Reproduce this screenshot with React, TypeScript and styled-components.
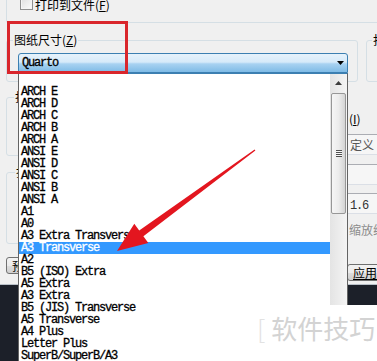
import React from "react";
import styled, { createGlobalStyle } from "styled-components";

const UI = `"Noto Sans CJK SC", "Noto Sans", sans-serif`;
const MONO = `"Liberation Mono", "DejaVu Sans Mono", monospace`;

const Global = createGlobalStyle`
  html, body { margin: 0; padding: 0; background: #f0f0f0; }
  body { font-family: ${UI}; }
`;

const Screen = styled.div`
  position: relative;
  width: 377px;
  height: 361px;
  overflow: hidden;
  background: #1c2029;
  font-family: ${UI};
  font-size: 12px;
  color: #000;
`;

const Dialog = styled.div`
  height: 284px;
  background: #f0f0f0;
  border-bottom: 1px solid #b9c0c8;
  overflow: hidden;
`;

const PrinterGroup = styled.div`
  height: 22px;
  margin-left: 6px;
  padding-left: 13px;
  border-left: 1px solid #d5dfe5;
  border-bottom: 1px solid #d5dfe5;
  border-bottom-left-radius: 3px;
  display: flex;
  align-items: flex-start;
`;

const CheckRow = styled.label`
  display: flex;
  align-items: flex-start;
  gap: 1px;
  margin-top: -3px;
`;

const CheckBox = styled.span`
  width: 11px;
  height: 11px;
  border: 1px solid #8f8f8f;
  background: linear-gradient(135deg, #dedede, #fbfbfb);
  box-shadow: inset 0 0 0 1px #f4f4f4;
`;

const CheckText = styled.span`
  line-height: 13px;
  margin-top: 1px;
  margin-left: 1px;
  white-space: nowrap;
`;

const SizeRow = styled.div`
  display: flex;
  gap: 8px;
  margin-top: 17px;
  margin-left: 6px;
`;

const GroupBox = styled.div<{ $w?: number; $h: number; $pl?: number }>`
  flex: none;
  width: ${(p) => (p.$w ? `${p.$w}px` : "auto")};
  height: ${(p) => p.$h}px;
  padding: 0 9px 0 ${(p) => p.$pl ?? 11}px;
  border: 1px solid #d5dfe5;
  border-radius: 3px;
  display: flex;
  flex-direction: column;
  align-items: flex-start;
`;

const Legend = styled.span`
  margin-top: -7px;
  margin-left: -5px;
  padding: 0 1px;
  line-height: 12px;
  background: #f0f0f0;
  white-space: nowrap;
`;

const monoText = `
  font-family: ${MONO};
  font-weight: 400;
  font-size: 12px;
  letter-spacing: -1.2px;
  -webkit-text-stroke: 0.3px currentColor;
`;

const Combo = styled.div`
  box-sizing: border-box;
  width: 330px;
  height: 20px;
  margin-top: 7px;
  padding: 0 3px;
  display: flex;
  align-items: center;
  justify-content: space-between;
  border: 1px solid #3c7fb1;
  border-radius: 3px 3px 0 0;
  background: linear-gradient(#e6f2fb 0%, #d6eaf9 45%, #a8d2f1 55%, #7fbbe6 100%);
  ${monoText}
`;

const LowerGrid = styled.div`
  display: grid;
  grid-template-columns: 335px 1fr;
  column-gap: 6px;
  margin-left: 6px;
`;

const Column = styled.div`
  display: flex;
  flex-direction: column;
  align-items: flex-start;
`;

const Spacer = styled.div<{ $h: number }>`
  height: ${(p) => p.$h}px;
  flex: none;
`;

const Button = styled.div<{ $w: number }>`
  box-sizing: border-box;
  width: ${(p) => p.$w}px;
  height: 17px;
  padding: 0 5px;
  border: 1px solid #707070;
  border-radius: 3px;
  background: linear-gradient(#f2f2f2 0%, #ebebeb 50%, #dddddd 51%, #cfcfcf 100%);
  line-height: 15px;
  white-space: nowrap;
  overflow: hidden;
`;

const Field = styled.div`
  box-sizing: border-box;
  width: 40px;
  height: 21px;
  padding-left: 3px;
  border-top: 1px solid #abadb3;
  border-bottom: 1px solid #dbdfe6;
  background: #f6f6f6;
  color: #555;
  line-height: 19px;
  white-space: nowrap;
`;

const MonoValue = styled.span`
  ${monoText}
  color: #333;
  -webkit-text-stroke: 0;
`;

const Label = styled.div<{ $muted?: boolean }>`
  padding-left: 2px;
  line-height: 12px;
  white-space: nowrap;
  color: ${(p) => (p.$muted ? "#8c8c8c" : "#000")};
`;

/* ---------- popup list ---------- */

const DropList = styled.div`
  position: absolute;
  left: 18px;
  top: 73px;
  width: 330px;
  height: 300px;
  box-sizing: border-box;
  border: 1px solid #646464;
  border-top-color: #3c7fb1;
  background: #fff;
  display: flex;
`;

const Options = styled.ul`
  flex: 1;
  margin: 0;
  padding: 12px 0 0;
  list-style: none;
`;

const Option = styled.li<{ $selected?: boolean }>`
  height: 12px;
  padding-left: 2px;
  line-height: 12px;
  white-space: pre;
  ${monoText}
  color: ${(p) => (p.$selected ? "#fff" : "#000")};
  background: ${(p) => (p.$selected ? "#3399ff" : "transparent")};
`;

const ScrollBar = styled.div`
  width: 17px;
  flex: none;
  display: flex;
  flex-direction: column;
  align-items: center;
  background: linear-gradient(to right, #e4e4e4, #f4f4f4);
`;

const ScrollArrow = styled.div`
  height: 17px;
  display: flex;
  align-items: center;
  justify-content: center;
`;

const Thumb = styled.div`
  box-sizing: border-box;
  width: 15px;
  height: 121px;
  margin-top: 2px;
  border: 1px solid #979797;
  border-radius: 2px;
  background: linear-gradient(to right, #f6f6f6 0%, #ececec 50%, #d4d4d4 100%);
  display: flex;
  align-items: center;
  justify-content: center;
`;

const Grip = styled.div`
  width: 6px;
  height: 7px;
  background: repeating-linear-gradient(#505050 0 1px, #f8f8f8 1px 2px);
`;

/* ---------- overlays ---------- */

const Callout = styled.div`
  position: absolute;
  left: 7px;
  top: 21px;
  width: 121px;
  height: 53px;
  box-sizing: border-box;
  border: 3px solid #d9262c;
`;

const ArrowLayer = styled.svg`
  position: absolute;
  left: 0;
  top: 0;
  pointer-events: none;
`;

const Watermark = styled.div`
  position: absolute;
  left: 250px;
  top: 305px;
  right: 0;
  bottom: 0;
  background: #fff;
  display: flex;
  align-items: flex-start;
  padding: 6px 0 0 7px;
  gap: 6px;
  font-family: ${UI};
  font-size: 26px;
  line-height: 34px;
  color: #d3d3d3;
  white-space: nowrap;
`;

const Bracket = styled.span`
  font-weight: 300;
  color: #e2e2e2;
`;

const sizes = [
  "ARCH E",
  "ARCH D",
  "ARCH C",
  "ARCH B",
  "ARCH A",
  "ANSI E",
  "ANSI D",
  "ANSI C",
  "ANSI B",
  "ANSI A",
  "A1",
  "A0",
  "A3 Extra Transverse",
  "A3 Transverse",
  "A2",
  "B5 (ISO) Extra",
  "A5 Extra",
  "A3 Extra",
  "B5 (JIS) Transverse",
  "A5 Transverse",
  "A4 Plus",
  "Letter Plus",
  "SuperB/SuperB/A3",
];

export default function App() {
  return (
    <>
      <Global />
      <Screen>
        <Dialog>
          <PrinterGroup>
            <CheckRow>
              <CheckBox />
              <CheckText>
                打印到文件(<u>F</u>)
              </CheckText>
            </CheckRow>
          </PrinterGroup>

          <SizeRow>
            <GroupBox $w={330} $h={40}>
              <Legend>
                图纸尺寸(<u>Z</u>)
              </Legend>
              <Combo>
                <span>Quarto</span>
                <svg width="7" height="4" viewBox="0 0 7 4">
                  <polygon points="0,0 7,0 3.5,4" fill="#000" />
                </svg>
              </Combo>
            </GroupBox>
            <GroupBox $w={60} $h={40} $pl={10}>
              <Legend>打印份数(B)</Legend>
            </GroupBox>
          </SizeRow>

          <LowerGrid>
            <Column>
              <Spacer $h={15} />
              <GroupBox $w={300} $h={57} $pl={12}>
                <Legend>打印区域</Legend>
              </GroupBox>
              <Spacer $h={16} />
              <GroupBox $w={300} $h={70} $pl={13}>
                <Legend>打印偏移</Legend>
              </GroupBox>
              <Spacer $h={13} />
              <Button $w={80}>预览(P)...</Button>
            </Column>
            <Column>
              <Spacer $h={31} />
              <Label>
                (<u>I</u>)
              </Label>
              <Spacer $h={9} />
              <Field>定义</Field>
              <Spacer $h={9} />
              <Field />
              <Spacer $h={8} />
              <Field>
                <MonoValue>1.6</MonoValue>
              </Field>
              <Spacer $h={10} />
              <Label $muted>缩放线宽</Label>
              <Spacer $h={28} />
              <Button $w={60}>
                <u>应用到布局</u>
              </Button>
            </Column>
          </LowerGrid>
        </Dialog>

        <DropList>
          <Options>
            {sizes.map((s) => (
              <Option key={s} $selected={s === "A3 Transverse"}>
                {s}
              </Option>
            ))}
          </Options>
          <ScrollBar>
            <ScrollArrow>
              <svg width="7" height="4" viewBox="0 0 7 4">
                <polygon points="0,4 7,4 3.5,0" fill="#3d3d3d" />
              </svg>
            </ScrollArrow>
            <Thumb>
              <Grip />
            </Thumb>
          </ScrollBar>
        </DropList>

        <Callout />

        <ArrowLayer width="377" height="361" viewBox="0 0 377 361">
          <polygon
            points="254.6,149.5 139.2,230.6 134.3,223.7 117,251 148.3,243.1 143.4,236.2 255.4,150.5"
            fill="#e3161f"
          />
        </ArrowLayer>

        <Watermark>
          <Bracket>[</Bracket>
          <span>软件技巧</span>
        </Watermark>
      </Screen>
    </>
  );
}
